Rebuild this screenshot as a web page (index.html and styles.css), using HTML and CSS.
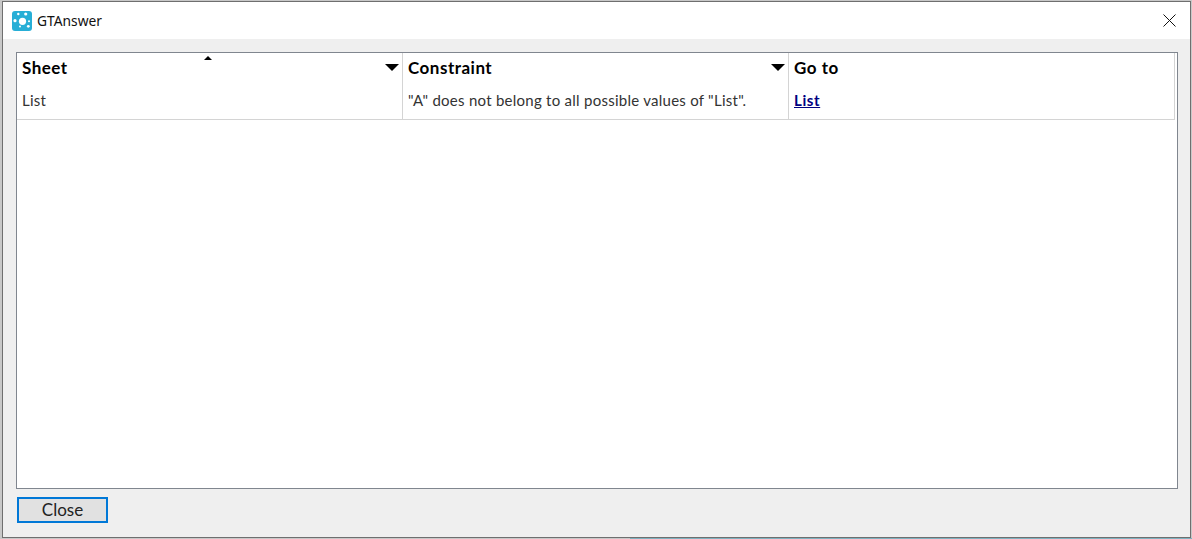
FILE: index.html
```html
<!DOCTYPE html>
<html lang="en">
<head>
  <meta charset="UTF-8" />
  <meta name="viewport" content="width=device-width, initial-scale=1.0"/>
  <title>GTAnswer</title>
  <link rel="stylesheet" href="styles.css">
</head>
<body>
  <div class="dialog">
    <div class="titlebar">
      <svg class="app-icon" width="20" height="20" viewBox="0 0 20 20">
        <rect width="20" height="20" rx="3" fill="#27aed6"/>
        <circle cx="10.5" cy="10.3" r="3.6" fill="#fff"/>
        <circle cx="3" cy="9.7" r="1.6" fill="#fff"/>
        <circle cx="6.3" cy="3" r="1.2" fill="#fff"/>
        <circle cx="13.7" cy="3" r="1.6" fill="#fff"/>
        <circle cx="17" cy="10.3" r="1" fill="#fff"/>
        <circle cx="16.3" cy="15.3" r="1.4" fill="#fff"/>
        <circle cx="8" cy="15.5" r="1" fill="#fff"/>
      </svg>
      <span class="title">GTAnswer</span>
      <svg class="close-x" width="13" height="13" viewBox="0 0 13 13">
        <path d="M.5.5l12 12M12.5.5l-12 12" stroke="#111" stroke-width="1" fill="none"/>
      </svg>
    </div>
    <div class="content">
      <div class="table-box">
        <div class="table">
          <div class="cell head sheet-col">
            <span>Sheet</span>
            <i class="sort-mark"></i>
            <i class="filter-mark"></i>
          </div>
          <div class="cell head constraint-col">
            <span>Constraint</span>
            <i class="filter-mark"></i>
          </div>
          <div class="cell head goto-col"><span>Go to</span></div>
          <div class="cell row sheet-col">List</div>
          <div class="cell row constraint-col">"A" does not belong to all possible values of "List".</div>
          <div class="cell row goto-col"><a href="#">List</a></div>
        </div>
      </div>
      <div class="buttons">
        <button class="close-btn">Close</button>
      </div>
    </div>
  </div>
</body>
</html>
```

FILE: styles.css
```css
html, body {
  height: 100%;
}

body {
  margin: 0;
  padding: 1px 1px 1px 2px;
  box-sizing: border-box;
  background-color: #c8c8c8;
  font-family: Lato, "Noto Sans", sans-serif;
  overflow: hidden;
}

/* sliver of the window behind the dialog, along the bottom edge */
body::after {
  content: "";
  position: fixed;
  left: 630px;
  right: 0;
  bottom: 0;
  height: 1px;
  background-color: #7fb2c0;
}

.dialog {
  height: 100%;
  box-sizing: border-box;
  border: 1px solid #6f6f6f;
  background-color: #efefef;
  display: flex;
  flex-direction: column;
}

.titlebar {
  height: 37px;
  flex: none;
  background-color: #fff;
  display: flex;
  align-items: center;
  padding: 0 14px 0 9px;
  gap: 5px;
}

.title {
  flex: 1;
  font-family: "Noto Sans", sans-serif;
  font-size: 13.8px;
  color: #111;
}

.content {
  flex: 1;
  display: flex;
  flex-direction: column;
  padding: 13px 12px 14px 13px;
  min-height: 0;
}

.table-box {
  flex: 1;
  background-color: #fff;
  border: 1px solid #80868f;
  min-height: 0;
}

.table {
  display: grid;
  grid-template-columns: 386px 386px 386px;
  grid-template-rows: 31px 36px;
}

.cell {
  position: relative;
  box-sizing: border-box;
  padding-left: 5px;
  border-right: 1px solid #d4d4d4;
  display: flex;
  align-items: center;
}

.head {
  font-size: 17px;
  font-weight: 700;
  letter-spacing: .5px;
  color: #000;
  padding-bottom: 2px;
}

.row {
  font-size: 15px;
  letter-spacing: .26px;
  color: #333;
  border-bottom: 1px solid #d4d4d4;
  padding-bottom: 3px;
}

.row a {
  color: #000080;
  font-weight: 700;
  letter-spacing: .6px;
}

.filter-mark {
  position: absolute;
  right: 3px;
  top: 11px;
  width: 0;
  height: 0;
  border-left: 7px solid transparent;
  border-right: 7px solid transparent;
  border-top: 7px solid #000;
}

.sort-mark {
  position: absolute;
  left: 187px;
  top: 3px;
  width: 0;
  height: 0;
  border-left: 4px solid transparent;
  border-right: 4px solid transparent;
  border-bottom: 4px solid #000;
}

.buttons {
  flex: none;
  padding: 8px 0 0 1px;
}

.close-btn {
  display: block;
  width: 91px;
  height: 26px;
  box-sizing: border-box;
  border: 2px solid #0078d7;
  background-color: #e1e1e1;
  color: #222;
  font-family: Lato, "Noto Sans", sans-serif;
  font-size: 17px;
  padding: 0 0 1px;
}
```
